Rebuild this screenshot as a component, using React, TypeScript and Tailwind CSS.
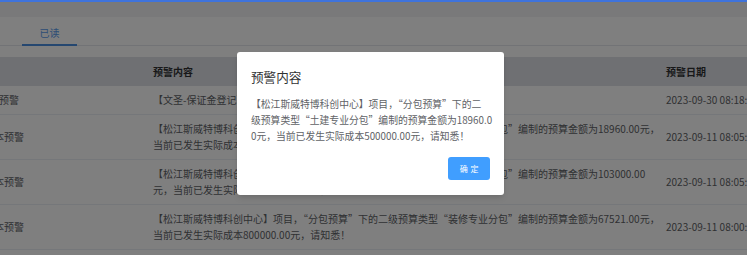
import React from "react";

const rows = [
  {
    type: "资金预警",
    lines: ["【文圣-保证金登记】保证金即将到期，请及时处理！"],
    date: "2023-09-30 08:18:02",
  },
  {
    type: "超成本预警",
    lines: [
      "【松江斯威特博科创中心】项目，“分包预算”下的二级预算类型“土建专业分包”编制的预算金额为18960.00元，",
      "当前已发生实际成本500000.00元，请知悉！",
    ],
    date: "2023-09-11 08:05:31",
  },
  {
    type: "超成本预警",
    lines: [
      "【松江斯威特博科创中心】项目，“分包预算”下的二级预算类型“土建专业分包”编制的预算金额为103000.00",
      "元，当前已发生实际成本500000.00元，请知悉！",
    ],
    date: "2023-09-11 08:05:31",
  },
  {
    type: "超成本预警",
    lines: [
      "【松江斯威特博科创中心】项目，“分包预算”下的二级预算类型“装修专业分包”编制的预算金额为67521.00元，",
      "当前已发生实际成本800000.00元，请知悉！",
    ],
    date: "2023-09-11 08:00:12",
  },
  {
    type: "超成本预警",
    lines: ["【松江斯威特博科创中心】项目，“分包预算”下的二级预算类型“安装专业分包”编制的预算金额为5200.00元，"],
    date: "2023-09-11 07:58:40",
  },
];

export default function App() {
  return (
    <div className="relative w-[747px] h-[255px] overflow-hidden bg-white font-['Noto_Sans_CJK_SC','Microsoft_YaHei',sans-serif]">
      {/* 상단 라인 */}
      <div className="relative z-30 h-[2px] bg-[#3f73dc]" />
      <div className="h-[15px] bg-[#f3f3f4]" />

      {/* tabs */}
      <div className="flex h-[29px] border-b border-[#e4e7ed]">
        <div className="relative ml-[22px] w-[55px] flex items-center justify-center pt-[3px] text-[10px] text-[#5a9cec]">
          已读
          <div className="absolute left-0 right-0 bottom-[-1px] h-[2px] bg-[#4a8fe0]" />
        </div>
      </div>

      <div className="h-[11px]" />

      {/* table */}
      <div className="flex flex-col text-[10px] leading-[16px]">
        <div className="flex h-[29px] items-center bg-[#dfe1e6] font-bold text-[#303133]">
          <div className="w-[143px] shrink-0" />
          <div className="w-[513px] shrink-0 px-[10px]">预警内容</div>
          <div className="px-[10px] whitespace-nowrap">预警日期</div>
        </div>
        {rows.map((row, i) => (
          <div
            key={i}
            className="flex items-center border-b border-[#ebeef5] py-[6px] text-[#606266]"
          >
            <div className="w-[143px] shrink-0">
              <div className="-ml-[51px] w-[100px] text-center whitespace-nowrap">
                {row.type}
              </div>
            </div>
            <div className="w-[513px] shrink-0 px-[10px] overflow-hidden">
              {row.lines.map((line, j) => (
                <div key={j} className="whitespace-nowrap">
                  {line}
                </div>
              ))}
            </div>
            <div className="px-[10px] whitespace-nowrap">{row.date}</div>
          </div>
        ))}
      </div>

      {/* mask */}
      <div className="absolute inset-0 z-10 bg-black/50" />

      {/* dialog */}
      <div className="absolute left-[237px] top-[52px] z-20 flex w-[267px] flex-col rounded-[3px] bg-white px-[14px] pt-[16px] pb-[15px] shadow-md">
        <div className="text-[12.6px] leading-[17px] text-[#303133]">预警内容</div>
        <div className="mt-[12px] text-[9.8px] leading-[15.75px] text-[#606266]">
          <div className="whitespace-nowrap">【松江斯威特博科创中心】项目，“分包预算”下的二</div>
          <div className="whitespace-nowrap">级预算类型“土建专业分包”编制的预算金额为18960.0</div>
          <div className="whitespace-nowrap">0元，当前已发生实际成本500000.00元，请知悉！</div>
        </div>
        <div className="mt-[13px] flex justify-end">
          <button className="flex h-[23px] w-[42px] items-center justify-center rounded-[3px] bg-[#409eff] pl-[3px] text-[8px] tracking-[0.34em] text-white">
            确定
          </button>
        </div>
      </div>
    </div>
  );
}
